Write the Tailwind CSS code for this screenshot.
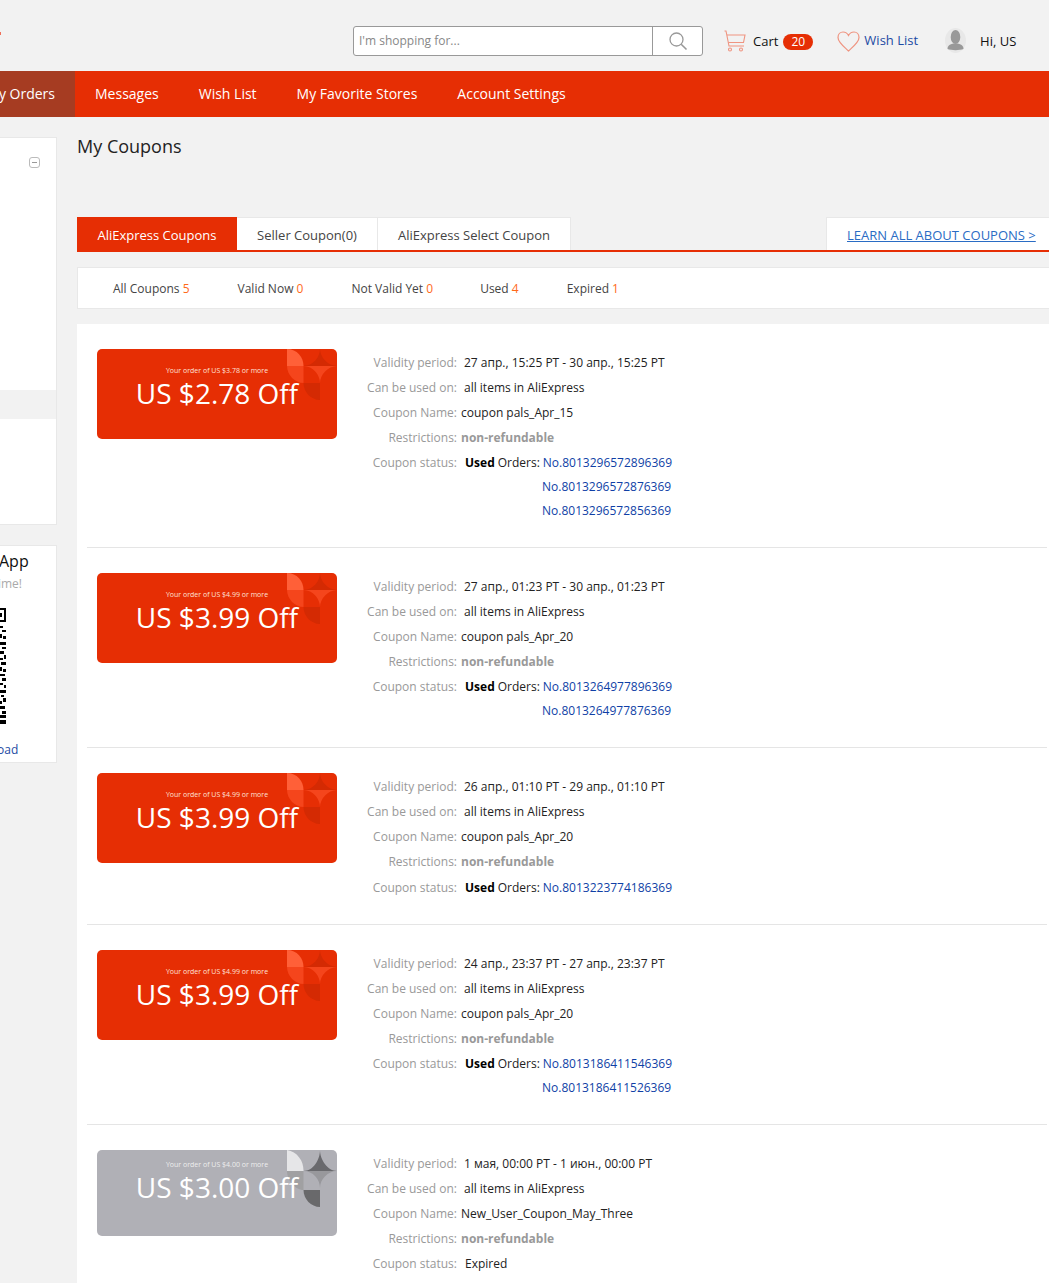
<!DOCTYPE html>
<html lang="en">
<head>
  <meta charset="UTF-8">
  <title>My Coupons</title>
  <script src="https://cdn.jsdelivr.net/npm/@tailwindcss/browser@4"></script>
</head>
<body class="bg-[#f2f2f2] font-['Open_Sans',sans-serif] text-[12px] text-[#222]">
<div class="relative w-[1049px] h-[1283px] overflow-hidden">
  <!-- Header -->
  <header class="relative h-[71px] flex items-center pl-[353px] pt-[12px]">
    <span class="absolute left-0 top-[32px] w-[1px] h-[3px] bg-[#f0705a]"></span>
    <div class="flex w-[350px] h-[30px] bg-white border border-[#999] rounded-[3px] -mt-[1px]">
      <div class="flex-1 pl-[5px] leading-[28px] text-[12px] text-[#888]">I'm shopping for...</div>
      <div class="w-[50px] border-l border-[#999] flex items-center justify-center">
        <svg width="20" height="20" viewBox="0 0 20 20" fill="none" stroke="#999" stroke-width="1.3"><circle cx="8.5" cy="8.5" r="6.5"/><path d="M13.2 13.2 L18.5 18.5" stroke-width="1.6"/></svg>
      </div>
    </div>
    <svg class="ml-[21px] -mt-[1px]" width="22" height="22" viewBox="0 0 22 22" fill="none" stroke="#ef9480" stroke-width="1.1"><path d="M0.5 1 L2 1 L5 16 L20 16"/><path d="M3 5 L21 5 L19.5 12.5 L4.5 12.5"/><circle cx="6" cy="19.5" r="1.5"/><circle cx="17" cy="19.5" r="1.5"/></svg>
    <span class="ml-[7px] text-[13px] text-[#111]">Cart</span>
    <span class="ml-[5px] w-[30px] h-[16px] rounded-full bg-[#e62e04] text-white text-[12px] leading-[16px] text-center">20</span>
    <svg class="ml-[24px] -mt-[1px]" width="23" height="21" viewBox="0 0 23 21" fill="none" stroke="#ef9480" stroke-width="1.2"><path d="M11.5 20 C8 16.5 1 11.5 1 6.5 C1 3 3.5 1 6 1 C8.5 1 10.5 2.5 11.5 4.5 C12.5 2.5 14.5 1 17 1 C19.5 1 22 3 22 6.5 C22 11.5 15 16.5 11.5 20 Z"/></svg>
    <a class="ml-[4px] -mt-[2px] text-[13px] text-[#1d4ba3]">Wish List</a>
    <svg class="ml-[27px] -mt-[2px]" width="21" height="25" viewBox="0 0 21 25"><ellipse cx="10.5" cy="12.5" rx="10.5" ry="12.5" fill="#e8e8e8"/><ellipse cx="10.5" cy="9" rx="4.8" ry="7" fill="#999"/><path d="M2.5 21 C2.5 17 6 15.5 10.5 15.5 C15 15.5 18.5 17 18.5 21 C15 22.5 6 22.5 2.5 21 Z" fill="#999"/></svg>
    <span class="ml-[14px] text-[13px] text-[#111]">Hi, US</span>
  </header>

  <!-- Nav -->
  <nav class="h-[46px] bg-[#e62e04] flex text-[14px] leading-[46px] text-white">
    <div class="w-[75px] bg-[#a63c22] flex justify-end pr-[20px] whitespace-nowrap overflow-hidden"><a>My Orders</a></div>
    <a class="ml-[20px]">Messages</a>
    <a class="ml-[40px]">Wish List</a>
    <a class="ml-[40px]">My Favorite Stores</a>
    <a class="ml-[40px]">Account Settings</a>
  </nav>

  <div class="flex">
    <!-- Sidebar, cut off by the left edge -->
    <aside class="w-[57px] shrink-0 pt-[20px]">
      <div class="h-[388px] bg-white border border-[#e8e8e8] border-l-0">
        <div class="flex justify-end pt-[19px] pr-[16px]">
          <span class="w-[11px] h-[11px] border border-[#bbb] rounded-[3px] flex items-center justify-center"><span class="w-[5px] h-[1px] bg-[#999]"></span></span>
        </div>
        <div class="mt-[222px] h-[29px] bg-[#f2f2f2]"></div>
      </div>
      <div class="mt-[20px] h-[218px] bg-white border border-[#e8e8e8] border-l-0">
        <div class="text-[16px] leading-[22px] mt-[4px] -ml-[1px] text-[#111]">App</div>
        <div class="text-[12px] leading-[16px] mt-[4px] text-[#aaa] w-[22px] overflow-hidden flex justify-end">ime!</div>
        <svg class="mt-[16px]" width="6" height="116" viewBox="0 0 6 116" fill="#000">
          <path d="M0 0 H6 V14 H0 V12 H4 V2 H0 Z"/><rect x="0" y="5" width="2" height="4"/>
          <rect x="0" y="18" width="3" height="2"/><rect x="2" y="22" width="4" height="2"/><rect x="0" y="26" width="2" height="4"/><rect x="3" y="28" width="3" height="3"/>
          <rect x="0" y="34" width="6" height="3"/><rect x="2" y="39" width="4" height="2"/><rect x="0" y="43" width="4" height="3"/><rect x="4" y="47" width="2" height="4"/>
          <rect x="0" y="50" width="3" height="2"/><rect x="1" y="54" width="5" height="3"/><rect x="0" y="59" width="2" height="4"/><rect x="3" y="61" width="3" height="3"/>
          <rect x="0" y="66" width="5" height="2"/><rect x="2" y="70" width="4" height="3"/><rect x="0" y="75" width="3" height="2"/><rect x="4" y="77" width="2" height="3"/>
          <rect x="0" y="82" width="6" height="3"/><rect x="1" y="87" width="3" height="2"/><rect x="3" y="90" width="3" height="4"/><rect x="0" y="93" width="2" height="3"/>
          <rect x="0" y="98" width="5" height="3"/><rect x="2" y="103" width="4" height="3"/><rect x="0" y="107" width="6" height="3"/><rect x="0" y="112" width="6" height="4"/>
        </svg>
        <div class="mt-[18px] -ml-[3px] text-[12px] leading-[16px] text-[#1d4ba3]">oad</div>
      </div>
    </aside>

    <!-- Main -->
    <main class="ml-[20px] w-[990px] shrink-0">
      <h1 class="pt-[17px] pb-[1px] text-[18px] leading-[24px] font-normal text-[#222]">My Coupons</h1>

      <!-- Tabs -->
      <div class="mt-[58px] h-[35px] flex border-b-2 border-[#e62e04] text-[13px] text-[#444]">
        <div class="w-[160px] bg-[#e62e04] text-white text-center leading-[36px]">AliExpress Coupons</div>
        <div class="w-[141px] bg-white border-t border-r border-[#e8e8e8] text-center leading-[34px]">Seller Coupon(0)</div>
        <div class="w-[193px] bg-white border-t border-r border-[#e8e8e8] text-center leading-[34px]">AliExpress Select Coupon</div>
        <div class="ml-[255px] flex-1 bg-white border-t border-l border-[#e8e8e8] pl-[20px] leading-[34px]">
          <a class="underline text-[#2a6cc4]">LEARN ALL ABOUT COUPONS &gt;</a>
        </div>
      </div>

      <!-- Filter -->
      <div class="mt-[15px] h-[42px] bg-white border border-[#e8e8e8] flex items-center pl-[35px] pt-[2px] text-[12px] text-[#444]">
        <span>All Coupons <b class="font-normal text-[#ff6a1a]">5</b></span>
        <span class="ml-[48px]">Valid Now <b class="font-normal text-[#ff6a1a]">0</b></span>
        <span class="ml-[48px]">Not Valid Yet <b class="font-normal text-[#ff6a1a]">0</b></span>
        <span class="ml-[47px]">Used <b class="font-normal text-[#ff6a1a]">4</b></span>
        <span class="ml-[48px]">Expired <b class="font-normal text-[#ff6a1a]">1</b></span>
      </div>

      <!-- Coupons -->
      <div class="mt-[15px] bg-white">
        <div class="ml-[10px] w-[960px] flex pl-[10px] pt-[25px] pb-[24px] border-b border-[#e5e5e5]">
          <div class="relative w-[240px] h-[90px] shrink-0 rounded-[5px] bg-[#e62e04] text-white text-center overflow-hidden">
            <svg class="absolute right-0 top-0" width="50" height="51" viewBox="0 0 50 51"><path d="M0 0 C10 0 16.5 8 16.5 17 H0 Z" fill="#ff6038"/><path d="M0 17 H16.5 V34 C8 34 0 26 0 17 Z" fill="#f5451c"/><path d="M16.5 17 C26 17 33 8 33 0 C33 8 41 17 50 17 Z" fill="#d42a03"/><path d="M16.5 17 H50 C41 17 33 26 33 34 C33 26 26 17 16.5 17 Z" fill="#f5451c"/><path d="M16.5 34 H33 V51 C24 51 16.5 43 16.5 34 Z" fill="#d42a03"/></svg>
            <div class="relative pt-[17px] text-[7px] leading-[9px] text-[#ffe0d8]">Your order of US $3.78 or more</div>
            <div class="relative text-[28px] leading-[36px]">US $2.78 Off</div>
          </div>
          <div class="mt-[1px] leading-[25px]">
            <div class="flex"><span class="w-[120px] text-right text-[#999]">Validity period:</span><span class="ml-[7px]">27 апр., 15:25 PT - 30 апр., 15:25 PT</span></div>
            <div class="flex"><span class="w-[120px] text-right text-[#999]">Can be used on:</span><span class="ml-[7px]">all items in AliExpress</span></div>
            <div class="flex"><span class="w-[120px] text-right text-[#999]">Coupon Name:</span><span class="ml-[4px]">coupon pals_Apr_15</span></div>
            <div class="flex"><span class="w-[120px] text-right text-[#999]">Restrictions:</span><span class="ml-[4px] font-bold text-[#999]">non-refundable</span></div>
            <div class="flex"><span class="w-[120px] text-right text-[#999]">Coupon status:</span><b class="ml-[8px] text-black">Used</b><span class="ml-[3px]">Orders:</span><a class="ml-[3px] text-[#0f3fa6]">No.8013296572896369</a></div>
            <div class="pl-[205px] leading-[24px] text-[#0f3fa6]"><a>No.8013296572876369</a></div>
            <div class="pl-[205px] leading-[24px] text-[#0f3fa6]"><a>No.8013296572856369</a></div>
          </div>
        </div>

        <div class="ml-[10px] w-[960px] flex pl-[10px] pt-[25px] pb-[24px] border-b border-[#e5e5e5]">
          <div class="relative w-[240px] h-[90px] shrink-0 rounded-[5px] bg-[#e62e04] text-white text-center overflow-hidden">
            <svg class="absolute right-0 top-0" width="50" height="51" viewBox="0 0 50 51"><path d="M0 0 C10 0 16.5 8 16.5 17 H0 Z" fill="#ff6038"/><path d="M0 17 H16.5 V34 C8 34 0 26 0 17 Z" fill="#f5451c"/><path d="M16.5 17 C26 17 33 8 33 0 C33 8 41 17 50 17 Z" fill="#d42a03"/><path d="M16.5 17 H50 C41 17 33 26 33 34 C33 26 26 17 16.5 17 Z" fill="#f5451c"/><path d="M16.5 34 H33 V51 C24 51 16.5 43 16.5 34 Z" fill="#d42a03"/></svg>
            <div class="relative pt-[17px] text-[7px] leading-[9px] text-[#ffe0d8]">Your order of US $4.99 or more</div>
            <div class="relative text-[28px] leading-[36px]">US $3.99 Off</div>
          </div>
          <div class="mt-[1px] leading-[25px]">
            <div class="flex"><span class="w-[120px] text-right text-[#999]">Validity period:</span><span class="ml-[7px]">27 апр., 01:23 PT - 30 апр., 01:23 PT</span></div>
            <div class="flex"><span class="w-[120px] text-right text-[#999]">Can be used on:</span><span class="ml-[7px]">all items in AliExpress</span></div>
            <div class="flex"><span class="w-[120px] text-right text-[#999]">Coupon Name:</span><span class="ml-[4px]">coupon pals_Apr_20</span></div>
            <div class="flex"><span class="w-[120px] text-right text-[#999]">Restrictions:</span><span class="ml-[4px] font-bold text-[#999]">non-refundable</span></div>
            <div class="flex"><span class="w-[120px] text-right text-[#999]">Coupon status:</span><b class="ml-[8px] text-black">Used</b><span class="ml-[3px]">Orders:</span><a class="ml-[3px] text-[#0f3fa6]">No.8013264977896369</a></div>
            <div class="pl-[205px] leading-[24px] text-[#0f3fa6]"><a>No.8013264977876369</a></div>
          </div>
        </div>

        <div class="ml-[10px] w-[960px] flex pl-[10px] pt-[25px] pb-[24px] border-b border-[#e5e5e5]">
          <div class="relative w-[240px] h-[90px] shrink-0 rounded-[5px] bg-[#e62e04] text-white text-center overflow-hidden">
            <svg class="absolute right-0 top-0" width="50" height="51" viewBox="0 0 50 51"><path d="M0 0 C10 0 16.5 8 16.5 17 H0 Z" fill="#ff6038"/><path d="M0 17 H16.5 V34 C8 34 0 26 0 17 Z" fill="#f5451c"/><path d="M16.5 17 C26 17 33 8 33 0 C33 8 41 17 50 17 Z" fill="#d42a03"/><path d="M16.5 17 H50 C41 17 33 26 33 34 C33 26 26 17 16.5 17 Z" fill="#f5451c"/><path d="M16.5 34 H33 V51 C24 51 16.5 43 16.5 34 Z" fill="#d42a03"/></svg>
            <div class="relative pt-[17px] text-[7px] leading-[9px] text-[#ffe0d8]">Your order of US $4.99 or more</div>
            <div class="relative text-[28px] leading-[36px]">US $3.99 Off</div>
          </div>
          <div class="mt-[1px] leading-[25px]">
            <div class="flex"><span class="w-[120px] text-right text-[#999]">Validity period:</span><span class="ml-[7px]">26 апр., 01:10 PT - 29 апр., 01:10 PT</span></div>
            <div class="flex"><span class="w-[120px] text-right text-[#999]">Can be used on:</span><span class="ml-[7px]">all items in AliExpress</span></div>
            <div class="flex"><span class="w-[120px] text-right text-[#999]">Coupon Name:</span><span class="ml-[4px]">coupon pals_Apr_20</span></div>
            <div class="flex"><span class="w-[120px] text-right text-[#999]">Restrictions:</span><span class="ml-[4px] font-bold text-[#999]">non-refundable</span></div>
            <div class="flex mt-[1px]"><span class="w-[120px] text-right text-[#999]">Coupon status:</span><b class="ml-[8px] text-black">Used</b><span class="ml-[3px]">Orders:</span><a class="ml-[3px] text-[#0f3fa6]">No.8013223774186369</a></div>
          </div>
        </div>

        <div class="ml-[10px] w-[960px] flex pl-[10px] pt-[25px] pb-[24px] border-b border-[#e5e5e5]">
          <div class="relative w-[240px] h-[90px] shrink-0 rounded-[5px] bg-[#e62e04] text-white text-center overflow-hidden">
            <svg class="absolute right-0 top-0" width="50" height="51" viewBox="0 0 50 51"><path d="M0 0 C10 0 16.5 8 16.5 17 H0 Z" fill="#ff6038"/><path d="M0 17 H16.5 V34 C8 34 0 26 0 17 Z" fill="#f5451c"/><path d="M16.5 17 C26 17 33 8 33 0 C33 8 41 17 50 17 Z" fill="#d42a03"/><path d="M16.5 17 H50 C41 17 33 26 33 34 C33 26 26 17 16.5 17 Z" fill="#f5451c"/><path d="M16.5 34 H33 V51 C24 51 16.5 43 16.5 34 Z" fill="#d42a03"/></svg>
            <div class="relative pt-[17px] text-[7px] leading-[9px] text-[#ffe0d8]">Your order of US $4.99 or more</div>
            <div class="relative text-[28px] leading-[36px]">US $3.99 Off</div>
          </div>
          <div class="mt-[1px] leading-[25px]">
            <div class="flex"><span class="w-[120px] text-right text-[#999]">Validity period:</span><span class="ml-[7px]">24 апр., 23:37 PT - 27 апр., 23:37 PT</span></div>
            <div class="flex"><span class="w-[120px] text-right text-[#999]">Can be used on:</span><span class="ml-[7px]">all items in AliExpress</span></div>
            <div class="flex"><span class="w-[120px] text-right text-[#999]">Coupon Name:</span><span class="ml-[4px]">coupon pals_Apr_20</span></div>
            <div class="flex"><span class="w-[120px] text-right text-[#999]">Restrictions:</span><span class="ml-[4px] font-bold text-[#999]">non-refundable</span></div>
            <div class="flex"><span class="w-[120px] text-right text-[#999]">Coupon status:</span><b class="ml-[8px] text-black">Used</b><span class="ml-[3px]">Orders:</span><a class="ml-[3px] text-[#0f3fa6]">No.8013186411546369</a></div>
            <div class="pl-[205px] leading-[24px] text-[#0f3fa6]"><a>No.8013186411526369</a></div>
          </div>
        </div>

        <div class="ml-[10px] w-[960px] flex pl-[10px] pt-[25px] pb-[24px]">
          <div class="relative w-[240px] h-[86px] shrink-0 rounded-[5px] bg-[#b0b0b6] text-white text-center overflow-hidden">
            <svg class="absolute right-0 top-0" width="50" height="57" viewBox="0 0 50 57"><path d="M0 0 C10 2 16.5 10 16.5 21 H0 Z" fill="#e6e6e8"/><path d="M0 21 H16.5 V40 C8 40 0 30 0 21 Z" fill="#a0a0a2"/><path d="M16.5 21 C26 21 33 10 33 0 C33 10 41 21 50 21 Z" fill="#69696d"/><path d="M16.5 21 H50 C41 21 33 29 33 38 C33 29 26 21 16.5 21 Z" fill="#98989c"/><path d="M16.5 40 H33 V57 C24 57 16.5 49 16.5 40 Z" fill="#69696b"/></svg>
            <div class="relative pt-[10px] text-[7px] leading-[9px] text-[#eee]">Your order of US $4.00 or more</div>
            <div class="relative text-[28px] leading-[36px]">US $3.00 Off</div>
          </div>
          <div class="mt-[1px] leading-[25px]">
            <div class="flex"><span class="w-[120px] text-right text-[#999]">Validity period:</span><span class="ml-[7px]">1 мая, 00:00 PT - 1 июн., 00:00 PT</span></div>
            <div class="flex"><span class="w-[120px] text-right text-[#999]">Can be used on:</span><span class="ml-[7px]">all items in AliExpress</span></div>
            <div class="flex"><span class="w-[120px] text-right text-[#999]">Coupon Name:</span><span class="ml-[4px]">New_User_Coupon_May_Three</span></div>
            <div class="flex"><span class="w-[120px] text-right text-[#999]">Restrictions:</span><span class="ml-[4px] font-bold text-[#999]">non-refundable</span></div>
            <div class="flex"><span class="w-[120px] text-right text-[#999]">Coupon status:</span><span class="ml-[8px]">Expired</span></div>
          </div>
        </div>
      </div>
    </main>
  </div>
</div>
</body>
</html>
